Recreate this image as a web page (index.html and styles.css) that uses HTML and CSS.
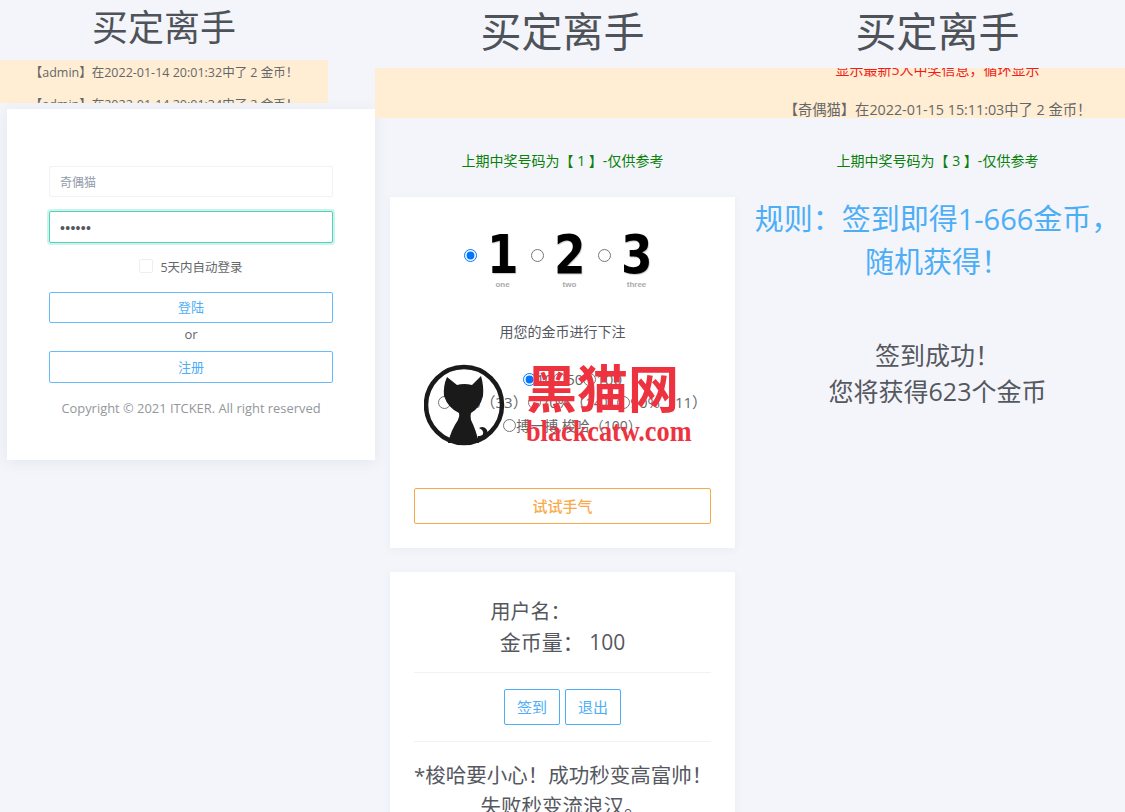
FILE: index.html
```html
<!DOCTYPE html>
<html lang="zh-CN">
<head>
<meta charset="utf-8">
<title>买定离手</title>
<link rel="stylesheet" href="styles.css">
</head>
<body>
<div class="page">
  <section class="col col-login">
    <header class="head-login">
      <h1 class="title title-small">买定离手</h1>
      <div class="band band-login">
        <div class="ticker ticker-login">
          <p>【admin】在2022-01-14 20:01:32中了 2 金币！</p>
          <p>【admin】在2022-01-14 20:01:34中了 2 金币！</p>
        </div>
      </div>
    </header>
    <form class="login-card">
      <input class="field" type="text" placeholder="奇偶猫">
      <input class="field field-focus" type="password" value="123456">
      <label class="remember"><span class="check"></span>5天内自动登录</label>
      <button class="btn btn-login" type="button">登陆</button>
      <div class="or">or</div>
      <button class="btn btn-reg" type="button">注册</button>
      <p class="copy">Copyright © 2021 ITCKER. All right reserved</p>
    </form>
  </section>

  <section class="col col-game">
    <h1 class="title">买定离手</h1>
    <div class="band"></div>
    <p class="last">上期中奖号码为【 1 】-仅供参考</p>
    <div class="card card-bet">
      <div class="numbers">
        <label class="num"><input type="radio" name="n" checked><span class="fig"><b>1</b><small>one</small></span></label>
        <label class="num"><input type="radio" name="n"><span class="fig"><b>2</b><small>two</small></span></label>
        <label class="num"><input type="radio" name="n"><span class="fig"><b>3</b><small>three</small></span></label>
      </div>
      <p class="bet-label">用您的金币进行下注</p>
      <div class="bets">
        <div class="bet-row"><input type="radio" name="b" checked>10<input type="radio" name="b">50<input type="radio" name="b">100</div>
        <div class="bet-row"><input type="radio" name="b">30%（33）<input type="radio" name="b">70%（14）<input type="radio" name="b">90%（11）</div>
        <div class="bet-row bet-row-all"><input type="radio" name="b">搏一搏,梭哈（100）</div>
      </div>
      <button class="btn btn-try" type="button">试试手气</button>
    </div>
    <div class="card card-user">
      <p class="user-line user-name">用户名：</p>
      <p class="user-line user-coin">金币量： 100</p>
      <div class="actions">
        <button class="btn btn-small" type="button">签到</button>
        <button class="btn btn-small" type="button">退出</button>
      </div>
      <p class="warn">*梭哈要小心！成功秒变高富帅！<br>失败秒变流浪汉。</p>
    </div>
    <div class="watermark">
      <svg class="cat" viewBox="0 0 82 87" width="82" height="87" aria-hidden="true">
        <circle cx="40" cy="43" r="38" fill="none" stroke="#1a1a1a" stroke-width="4.5"/>
        <path d="M23 15 L33 23 Q40 21 48 23 L57 14 Q60 24 59 34 Q56 46 47 51 Q46 54 47 58 Q52 68 55 81 L24 81 Q27 68 34 58 Q36 54 35 51 Q24 46 20 34 Q19 24 23 15 Z" fill="#1a1a1a"/>
        <path d="M54 79 Q66 78 63 68 Q60 63 55 66 Q60 68 59 72 Q58 74 54 74 Z" fill="#1a1a1a"/>
      </svg>
      <div class="wm-text">
        <span class="wm-cn">黑猫网</span>
        <span class="wm-en">blackcatw.com</span>
      </div>
    </div>
  </section>

  <section class="col col-sign">
    <h1 class="title">买定离手</h1>
    <div class="band">
      <div class="ticker ticker-sign">
        <p class="red">显示最新5人中奖信息，循环显示</p>
        <p>【奇偶猫】在2022-01-15 15:11:03中了 2 金币！</p>
      </div>
    </div>
    <p class="last">上期中奖号码为【 3 】-仅供参考</p>
    <p class="rule">规则：签到即得1-666金币，<br>随机获得！</p>
    <p class="result">签到成功！<br>您将获得623个金币</p>
  </section>
</div>
</body>
</html>
```

FILE: styles.css
```css
* { box-sizing: border-box; }
html, body { margin: 0; padding: 0; height: 812px; overflow: hidden; }
body {
  background: #f3f5fa;
  color: #55585f;
  font-family: "Open Sans", "Noto Sans CJK SC", sans-serif;
  font-size: 14px;
}
p { margin: 0; }
.page { display: flex; width: 1125px; height: 812px; overflow: hidden; }
.col { width: 375px; flex: none; text-align: center; position: relative; }

.title { margin: 0; height: 68px; font-size: 41px; line-height: 62px; font-weight: 400; color: #4e5259; }
.title-small { height: 60px; font-size: 36px; line-height: 55px; }

.band { height: 50px; background: #ffeed3; overflow: hidden; }
.head-login { width: 328px; }
.band-login { height: 43px; }
.ticker p { white-space: nowrap; }
.ticker-login { margin-top: -3px; font-size: 12.5px; line-height: 32px; color: #66676a; }
.ticker-sign { margin-top: -18px; font-size: 14.3px; line-height: 40px; color: #66676a; }
.red { color: #f01c1c; font-size: 14px; }

.login-card {
  margin: 6px 0 0 7px;
  width: 368px;
  height: 351px;
  padding: 57px 42px 0;
  background: #fff;
  box-shadow: 0 2px 14px rgba(60, 70, 110, .08);
  display: flex;
  flex-direction: column;
  position: relative;
}
.field {
  width: 284px;
  height: 31px;
  padding: 2px 10px 0;
  border: 1px solid #f1f2f5;
  border-radius: 2px;
  font: 12px "Open Sans", "Noto Sans CJK SC", sans-serif;
  color: #55585f;
  outline: none;
}
.field::placeholder { color: #949bab; }
.field-focus {
  margin-top: 14px;
  height: 32px;
  border-color: #4fd3bf;
  box-shadow: 0 0 0 2px #cdf3ec;
  font-family: "Liberation Sans", sans-serif;
  font-size: 14px;
  letter-spacing: .3px;
}
.remember {
  margin-top: 16px;
  height: 14px;
  display: flex;
  align-items: center;
  justify-content: center;
  gap: 7px;
  font-size: 12.5px;
  color: #66676a;
}
.check { width: 14px; height: 14px; border: 1px solid #eceef2; border-radius: 2px; background: #fff; }
.btn {
  display: block;
  background: #fff;
  border: 1px solid #68bbfb;
  border-radius: 2px;
  color: #4daef6;
  font: 13px/1 "Open Sans", "Noto Sans CJK SC", sans-serif;
  padding: 0;
}
.btn-login { margin-top: 19px; height: 31px; width: 284px; }
.or { height: 28px; line-height: 23px; font-size: 13px; color: #66676a; }
.btn-reg { height: 32px; width: 284px; }
.copy { margin-top: 16px; font-size: 12.9px; line-height: 18px; color: #93969c; white-space: nowrap; }

.last { height: 79px; padding-top: 33px; line-height: 20px; font-size: 14px; color: #0a800a; }

.card { margin: 0 15px; width: 345px; padding: 0 24px; background: #fff; box-shadow: 0 2px 8px rgba(60, 70, 110, .05); }
.card-bet { height: 351px; padding-top: 33px; }
.numbers { display: flex; justify-content: center; gap: 9px; padding-right: 5px; }
.num { display: flex; align-items: flex-start; gap: 6px; width: 58px; }
.num input { margin: 19px 0 0; flex: none; }
.fig { display: flex; flex-direction: column; align-items: center; width: 39px; }
.fig b { font: 700 54px/50px "DejaVu Sans", sans-serif; color: #000; text-shadow: 1px 1px 1px #ccc; transform: scaleX(.84); }
.fig small { font: 700 8px/10px "Liberation Sans", sans-serif; color: #aaa; }
.bet-label { margin-top: 32px; font-size: 14px; line-height: 20px; }
.bets { margin-top: 26px; height: 69px; padding-left: 20px; font-size: 15px; line-height: 23px; color: #66676a; white-space: nowrap; }
.bet-row input { margin: 0; vertical-align: -1px; }
.bet-row-all { font-size: 14px; }
.btn-try { margin-top: 51px; width: 297px; height: 36px; border-color: #f6a944; color: #f9ab4b; font-size: 15px; font-weight: 500; }

.card-user { margin-top: 24px; height: 300px; padding-top: 25px; }
.user-line { font-size: 21px; line-height: 30px; }
.user-name { padding-right: 64px; font-size: 20px; }
.user-coin { margin-bottom: 15px; }
.actions {
  border-top: 1px solid #f1f2f5;
  border-bottom: 1px solid #f1f2f5;
  height: 70px;
  display: flex;
  justify-content: center;
  align-items: center;
  gap: 5px;
}
.btn-small { width: 56px; height: 36px; font-size: 15px; border-color: #4daef6; }
.warn { margin-top: 18px; font-size: 20.5px; line-height: 31px; white-space: nowrap; }

.rule { margin-top: 0; font-size: 29px; line-height: 43px; color: #4daef6; white-space: nowrap; }
.result { margin-top: 54px; font-size: 25px; line-height: 36px; color: #55585f; white-space: nowrap; }

.watermark { position: absolute; left: 49px; top: 362px; display: flex; gap: 20px; text-align: left; pointer-events: none; }
.cat { flex: none; }
.wm-text { display: flex; flex-direction: column; }
.wm-cn { font-size: 51px; line-height: 53px; font-weight: 700; color: #ee3340; }
.wm-en { font: 700 30px/32px "Liberation Serif", serif; color: #ee3340; transform: scaleX(.875); transform-origin: left; white-space: nowrap; }
```
